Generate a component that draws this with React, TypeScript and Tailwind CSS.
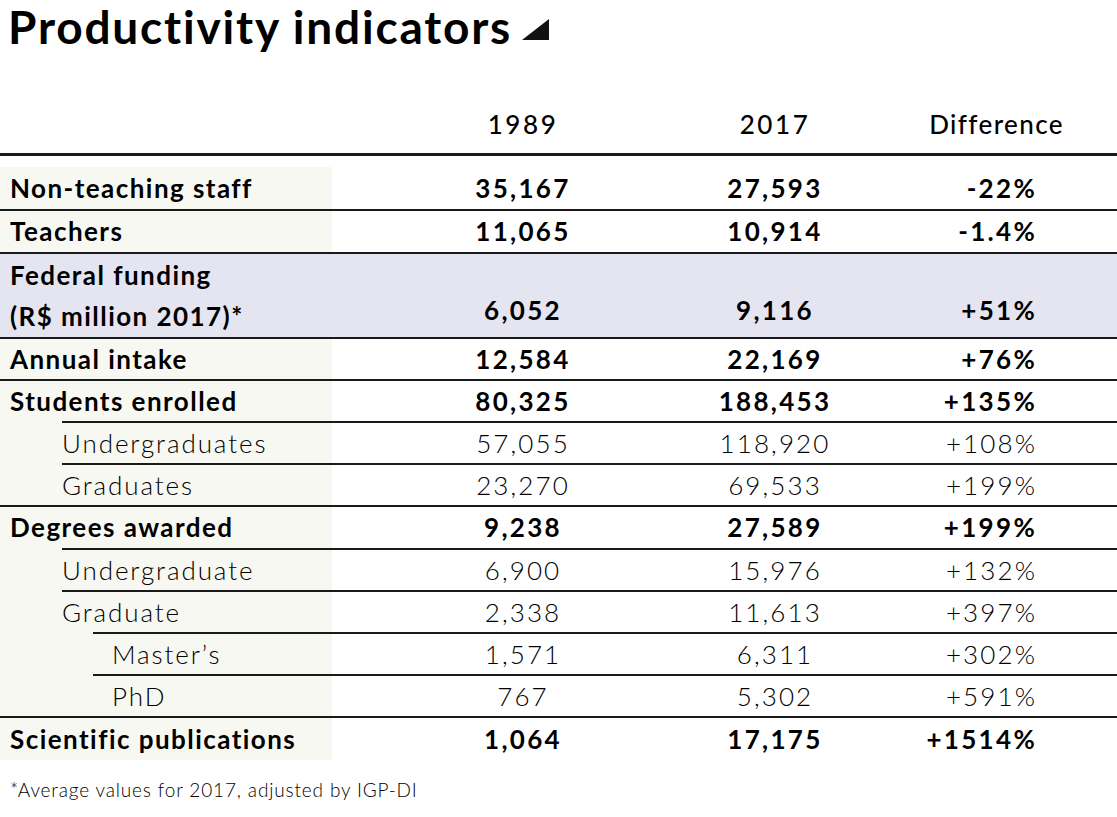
import React from "react";

type Row = {
  label: string;
  label2?: string;
  a: string;
  b: string;
  d: string;
  level: 0 | 1 | 2;
  bold: boolean;
  hl?: boolean;
  tall?: boolean;
};

const rows: Row[] = [
  { label: "Non-teaching staff", a: "35,167", b: "27,593", d: "-22%", level: 0, bold: true },
  { label: "Teachers", a: "11,065", b: "10,914", d: "-1.4%", level: 0, bold: true, tall: true },
  { label: "Federal funding", label2: "(R$ million 2017)*", a: "6,052", b: "9,116", d: "+51%", level: 0, bold: true, hl: true },
  { label: "Annual intake", a: "12,584", b: "22,169", d: "+76%", level: 0, bold: true },
  { label: "Students enrolled", a: "80,325", b: "188,453", d: "+135%", level: 0, bold: true },
  { label: "Undergraduates", a: "57,055", b: "118,920", d: "+108%", level: 1, bold: false },
  { label: "Graduates", a: "23,270", b: "69,533", d: "+199%", level: 1, bold: false },
  { label: "Degrees awarded", a: "9,238", b: "27,589", d: "+199%", level: 0, bold: true, tall: true },
  { label: "Undergraduate", a: "6,900", b: "15,976", d: "+132%", level: 1, bold: false },
  { label: "Graduate", a: "2,338", b: "11,613", d: "+397%", level: 1, bold: false },
  { label: "Master’s", a: "1,571", b: "6,311", d: "+302%", level: 2, bold: false },
  { label: "PhD", a: "767", b: "5,302", d: "+591%", level: 2, bold: false },
  { label: "Scientific publications", a: "1,064", b: "17,175", d: "+1514%", level: 0, bold: true },
];

const lineIndent = ["w-0", "w-[62px]", "w-[93px]"];
const textIndent = ["pl-[10px]", "pl-[62px]", "pl-[112px]"];

function Line({ level }: { level: 0 | 1 | 2 }) {
  return (
    <div className="flex h-[2px]">
      <div className={`${lineIndent[level]} shrink-0 bg-[#f8f8f3]`} />
      <div className="flex-1 bg-[#1a1a1a]" />
    </div>
  );
}

function DataRow({ r, first, last }: { r: Row; first?: boolean; last?: boolean }) {
  const weight = r.bold ? "font-bold" : "font-light";
  const labelTrack = r.bold ? "tracking-[1.45px]" : "tracking-[1.9px]";
  const numTrack = r.bold ? "tracking-[2.3px]" : "tracking-[2.1px]";
  const h = r.hl
    ? "h-[83px]"
    : first
    ? "h-[53px] pt-[11px]"
    : last
    ? "h-[51px] pb-[9px]"
    : r.tall
    ? "h-[41px]"
    : "h-[40px]";
  const align = r.hl ? "items-end pb-[7px]" : "items-center";
  return (
    <div className={`flex ${h} ${r.hl ? "bg-[#e5e5f1]" : "bg-white"} ${weight} text-[26px] text-black`}>
      <div className="w-[397px] shrink-0 flex">
        <div
          className={`w-[332px] ${r.hl ? "" : "bg-[#f8f8f3]"} ${textIndent[r.level]} ${labelTrack} flex flex-col justify-center whitespace-nowrap`}
        >
          {r.label2 ? (
            <>
              <div className="leading-[42px]">{r.label}</div>
              <div className="leading-[41px]">{r.label2}</div>
            </>
          ) : (
            <div>{r.label}</div>
          )}
        </div>
      </div>
      <div className={`w-[250px] shrink-0 flex justify-center pl-[2px] ${numTrack} ${align}`}>{r.a}</div>
      <div className={`w-[254px] shrink-0 flex justify-center pl-[2px] ${numTrack} ${align}`}>{r.b}</div>
      <div className={`flex-1 flex justify-end pr-[80px] ${numTrack} ${align}`}>{r.d}</div>
    </div>
  );
}

export default function App() {
  return (
    <div className="w-[1117px] h-[817px] bg-white text-black" style={{ fontFamily: "Lato, 'Open Sans', sans-serif" }}>
      <div className="flex items-center h-[54px] pl-[8px]">
        <h1 className="text-[46px] font-bold leading-[54px] tracking-[1.8px] whitespace-nowrap">Productivity indicators</h1>
        <svg className="ml-[10px] mt-[4px]" width="27" height="21" viewBox="0 0 27 21">
          <polygon points="27,0 27,21 0,21" fill="#111" />
        </svg>
      </div>
      <div className="flex h-[99px] items-end pb-[9px] text-[26px] font-medium">
        <div className="w-[397px] shrink-0" />
        <div className="w-[250px] shrink-0 text-center pl-[2px] tracking-[2.6px]">1989</div>
        <div className="w-[254px] shrink-0 text-center pl-[2px] tracking-[2.6px]">2017</div>
        <div className="flex-1 text-right pr-[53px] tracking-[1.4px]">Difference</div>
      </div>
      <div className="h-[3px] bg-[#1a1a1a]" />
      {rows.map((r, i) => (
        <React.Fragment key={i}>
          {i > 0 && <Line level={r.level} />}
          <DataRow r={r} first={i === 0} last={i === rows.length - 1} />
        </React.Fragment>
      ))}
      <div className="pl-[10px] pt-[7px] text-[19px] font-light tracking-[0.85px]">*Average values for 2017, adjusted by IGP-DI</div>
    </div>
  );
}
